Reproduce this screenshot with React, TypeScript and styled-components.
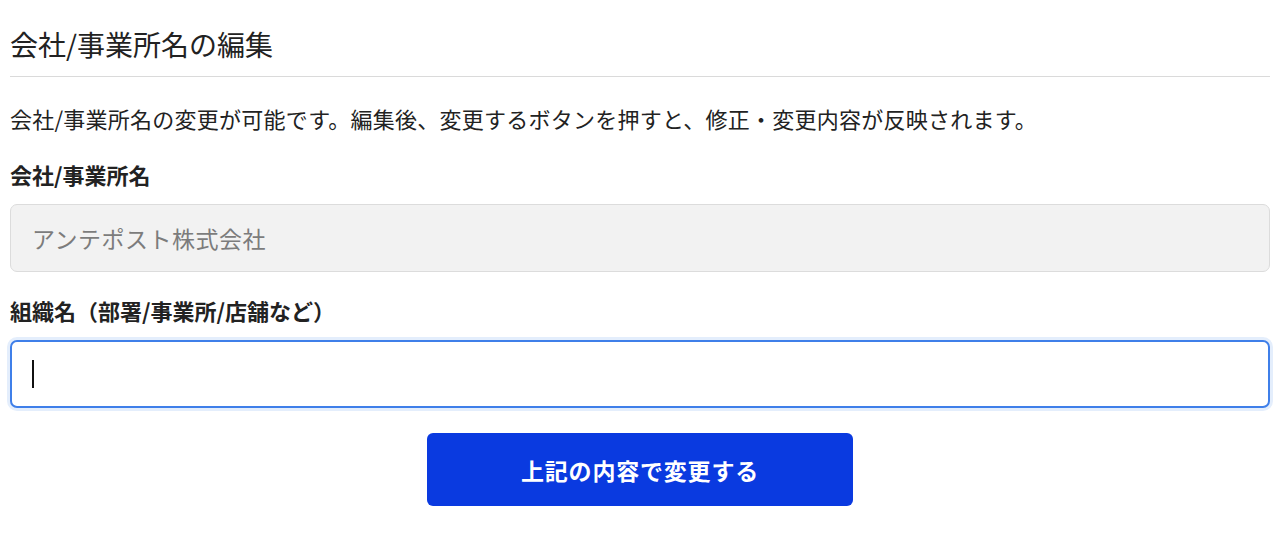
import React from 'react'
import styled, { createGlobalStyle } from 'styled-components'

const GlobalStyle = createGlobalStyle`
  html, body {
    margin: 0;
    padding: 0;
    background: #fff;
  }
  body {
    font-family: 'Noto Sans CJK JP', 'Noto Sans', sans-serif;
    color: #222;
  }
`

const Page = styled.div`
  display: flex;
  flex-direction: column;
  padding: 24px 10px 30px;
`

const Title = styled.h1`
  margin: 0;
  padding-bottom: 12px;
  border-bottom: 1px solid #dadada;
  font-size: 28px;
  font-weight: 400;
  line-height: 40px;
  color: #222;
`

const Description = styled.p`
  margin: 25px 0 0;
  font-size: 22px;
  letter-spacing: 0.25px;
  line-height: 32px;
  color: #222;
`

const FieldGroup = styled.div<{ $top: number }>`
  display: flex;
  flex-direction: column;
  gap: 14px;
  margin-top: ${(p) => p.$top}px;
`

const Label = styled.label`
  font-size: 22px;
  font-weight: 700;
  line-height: 32px;
  color: #222;
`

const ReadonlyInput = styled.input`
  box-sizing: border-box;
  width: 100%;
  height: 68px;
  padding: 0 21px;
  border: 1px solid #dcdcdc;
  border-radius: 7px;
  background: #f2f2f2;
  font-family: inherit;
  font-size: 23px;
  letter-spacing: 0.5px;
  color: #7c7c7c;
  outline: none;
`

const ActiveField = styled.div`
  box-sizing: border-box;
  display: flex;
  align-items: center;
  height: 68px;
  padding: 0 20px;
  border: 2px solid #3f7fe9;
  border-radius: 7px;
  background: #fff;
  box-shadow: 0 0 0 3px #e4eefc;
`

const Caret = styled.span`
  display: block;
  width: 1.5px;
  height: 28px;
  background: #111;
`

const Actions = styled.div`
  display: flex;
  justify-content: center;
  margin-top: 25px;
`

const SubmitButton = styled.button`
  width: 426px;
  height: 73px;
  border: none;
  border-radius: 6px;
  background: #0a3ae0;
  color: #fff;
  font-family: inherit;
  font-size: 23px;
  letter-spacing: 0.8px;
  font-weight: 700;
  cursor: pointer;
`

const App: React.FunctionComponent = () => {
  return (
    <>
      <GlobalStyle />
      <Page>
        <Title>会社/事業所名の編集</Title>
        <Description>
          会社/事業所名の変更が可能です。編集後、変更するボタンを押すと、修正・変更内容が反映されます。
        </Description>
        <FieldGroup $top={24}>
          <Label>会社/事業所名</Label>
          <ReadonlyInput readOnly value="アンテポスト株式会社" />
        </FieldGroup>
        <FieldGroup $top={22}>
          <Label>組織名（部署/事業所/店舗など）</Label>
          <ActiveField>
            <Caret />
          </ActiveField>
        </FieldGroup>
        <Actions>
          <SubmitButton>上記の内容で変更する</SubmitButton>
        </Actions>
      </Page>
    </>
  )
}

export default App
